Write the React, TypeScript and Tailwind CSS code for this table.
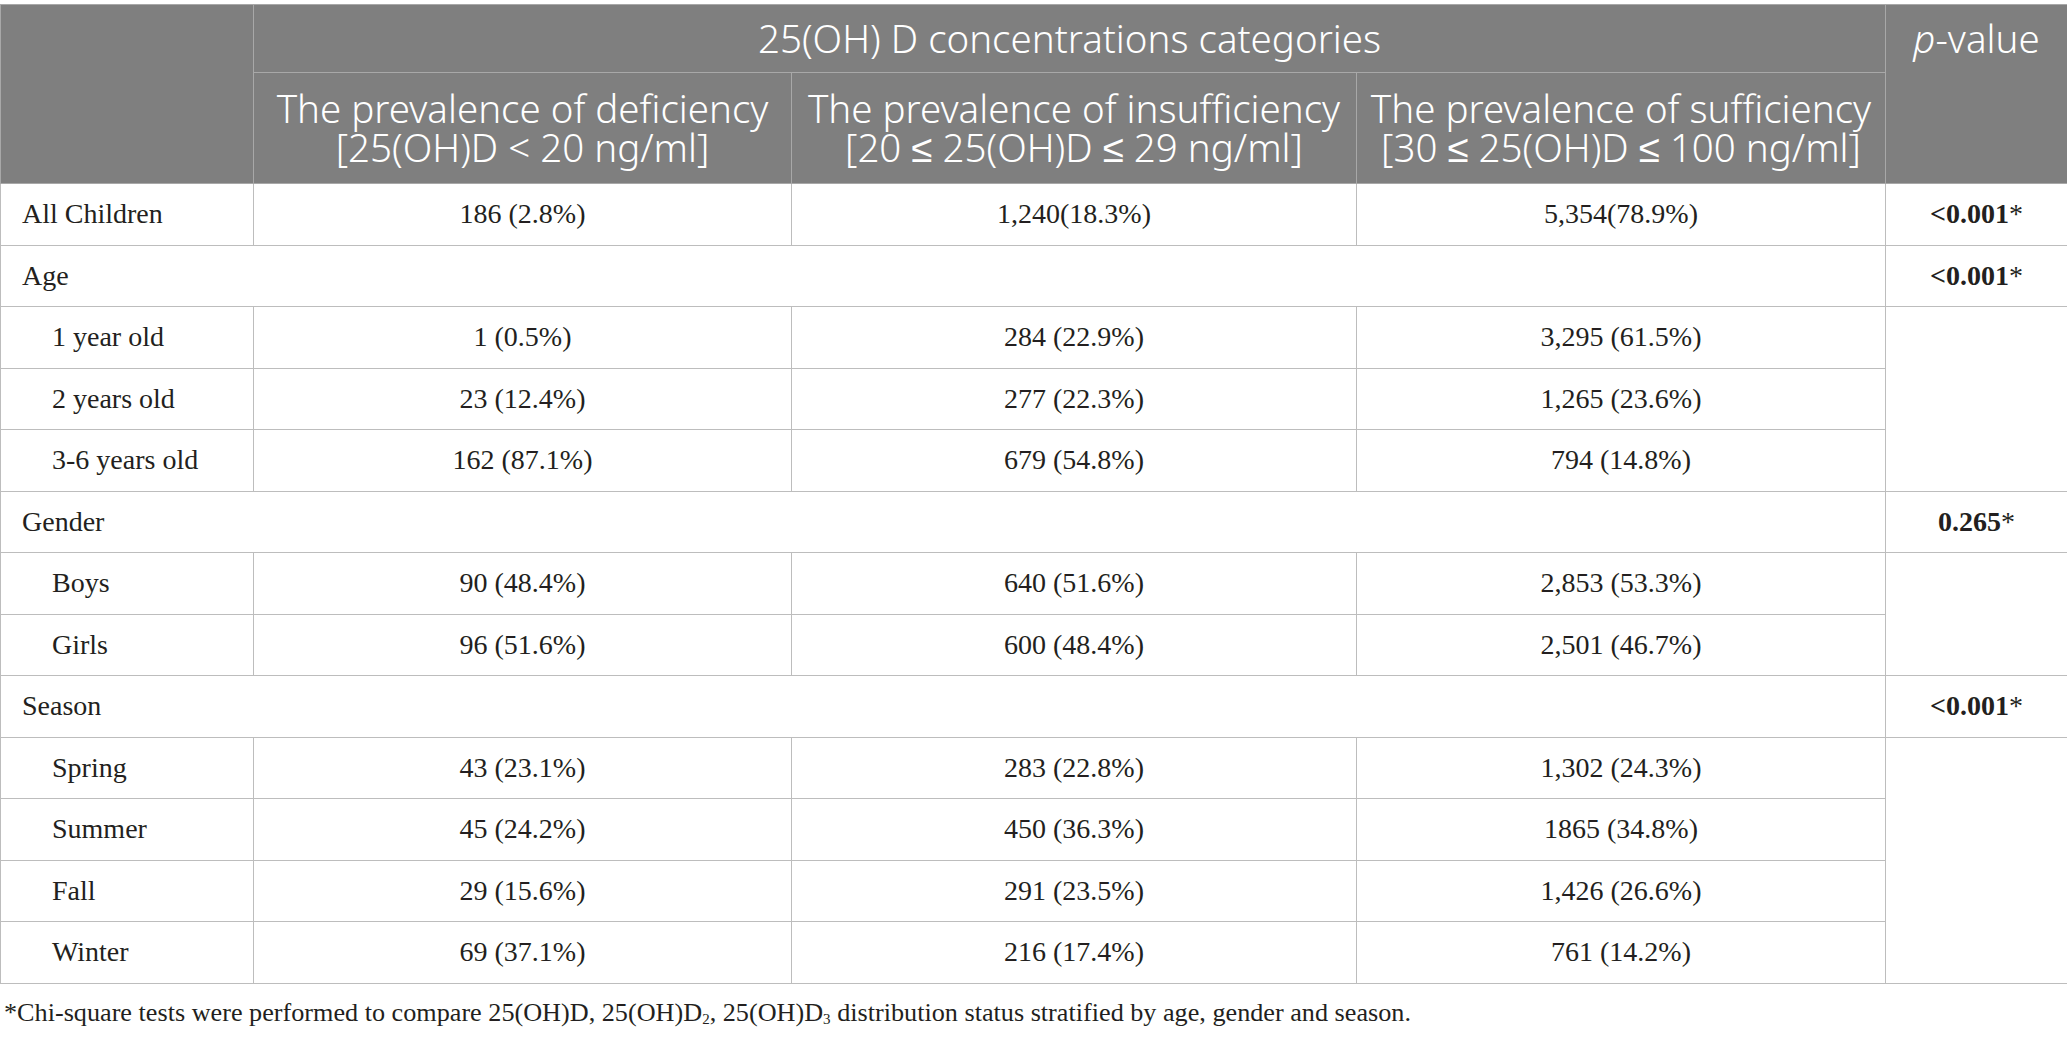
import { Fragment } from 'react';

type Line = { label: string; vals: string[] };
type Group = { title: string; p: string; items: Line[] };

const ALL: Line = { label: 'All Children', vals: ['186 (2.8%)', '1,240(18.3%)', '5,354(78.9%)'] };

const GROUPS: Group[] = [
  {
    title: 'Age',
    p: '<0.001',
    items: [
      { label: '1 year old', vals: ['1 (0.5%)', '284 (22.9%)', '3,295 (61.5%)'] },
      { label: '2 years old', vals: ['23 (12.4%)', '277 (22.3%)', '1,265 (23.6%)'] },
      { label: '3-6 years old', vals: ['162 (87.1%)', '679 (54.8%)', '794 (14.8%)'] },
    ],
  },
  {
    title: 'Gender',
    p: '0.265',
    items: [
      { label: 'Boys', vals: ['90 (48.4%)', '640 (51.6%)', '2,853 (53.3%)'] },
      { label: 'Girls', vals: ['96 (51.6%)', '600 (48.4%)', '2,501 (46.7%)'] },
    ],
  },
  {
    title: 'Season',
    p: '<0.001',
    items: [
      { label: 'Spring', vals: ['43 (23.1%)', '283 (22.8%)', '1,302 (24.3%)'] },
      { label: 'Summer', vals: ['45 (24.2%)', '450 (36.3%)', '1865 (34.8%)'] },
      { label: 'Fall', vals: ['29 (15.6%)', '291 (23.5%)', '1,426 (26.6%)'] },
      { label: 'Winter', vals: ['69 (37.1%)', '216 (17.4%)', '761 (14.2%)'] },
    ],
  },
];

const HEADS = [
  ['The prevalence of deficiency', '[25(OH)D < 20 ng/ml]'],
  ['The prevalence of insufficiency', '[20 ≤ 25(OH)D ≤ 29 ng/ml]'],
  ['The prevalence of sufficiency', '[30 ≤ 25(OH)D ≤ 100 ng/ml]'],
];

const td = 'border border-[#bdbdbd] p-0 align-middle';

function PValue({ v }: { v: string }) {
  return (
    <span>
      <b className="font-bold">{v}</b>*
    </span>
  );
}

export default function App() {
  return (
    <div className="bg-white w-[2067px] pt-[4px] font-['Liberation_Serif',serif] text-[#231f20]">
      <table className="w-[2067px] table-fixed border-collapse">
        <colgroup>
          <col className="w-[253px]" />
          <col className="w-[538px]" />
          <col className="w-[565px]" />
          <col className="w-[529px]" />
          <col className="w-[182px]" />
        </colgroup>
        <thead className="bg-[#7f7f7f] text-white font-['Noto_Sans',sans-serif] font-light text-[38.5px] leading-[39px]">
          <tr className="h-[68px]">
            <th rowSpan={2} className="border border-[#a8a8a8] p-0 font-light" />
            <th colSpan={3} className="border border-[#a8a8a8] p-0 font-light text-center">
              25(OH) D concentrations categories
            </th>
            <th rowSpan={2} className="border border-[#a8a8a8] px-0 pt-[14px] align-top font-light text-center">
              <i>p</i>-value
            </th>
          </tr>
          <tr className="h-[111px]">
            {HEADS.map(([a, b]) => (
              <th key={a} className="border border-[#a8a8a8] p-0 font-light text-center whitespace-nowrap">
                {a}
                <br />
                {b}
              </th>
            ))}
          </tr>
        </thead>
        <tbody className="text-[28px]">
          <tr className="h-[61.5px]">
            <td className={`${td} pl-[21px]`}>{ALL.label}</td>
            {ALL.vals.map((v) => (
              <td key={v} className={`${td} text-center`}>{v}</td>
            ))}
            <td className={`${td} text-center`}>
              <PValue v="<0.001" />
            </td>
          </tr>
          {GROUPS.map((g) => (
            <Fragment key={g.title}>
              <tr className="h-[61.5px]">
                <td colSpan={4} className={`${td} pl-[21px]`}>{g.title}</td>
                <td className={`${td} text-center`}>
                  <PValue v={g.p} />
                </td>
              </tr>
              {g.items.map((r, i) => (
                <tr key={r.label} className="h-[61.5px]">
                  <td className={`${td} pl-[51px]`}>{r.label}</td>
                  {r.vals.map((v, j) => (
                    <td key={j} className={`${td} text-center`}>{v}</td>
                  ))}
                  {i === 0 && <td rowSpan={g.items.length} className={td} />}
                </tr>
              ))}
            </Fragment>
          ))}
        </tbody>
      </table>
      <p className="pl-[4px] pt-[12px] text-[26.2px] leading-[34px]">
        *Chi-square tests were performed to compare 25(OH)D, 25(OH)D
        <sub className="text-[15px]">2</sub>, 25(OH)D<sub className="text-[15px]">3</sub> distribution status stratified
        by age, gender and season.
      </p>
    </div>
  );
}
